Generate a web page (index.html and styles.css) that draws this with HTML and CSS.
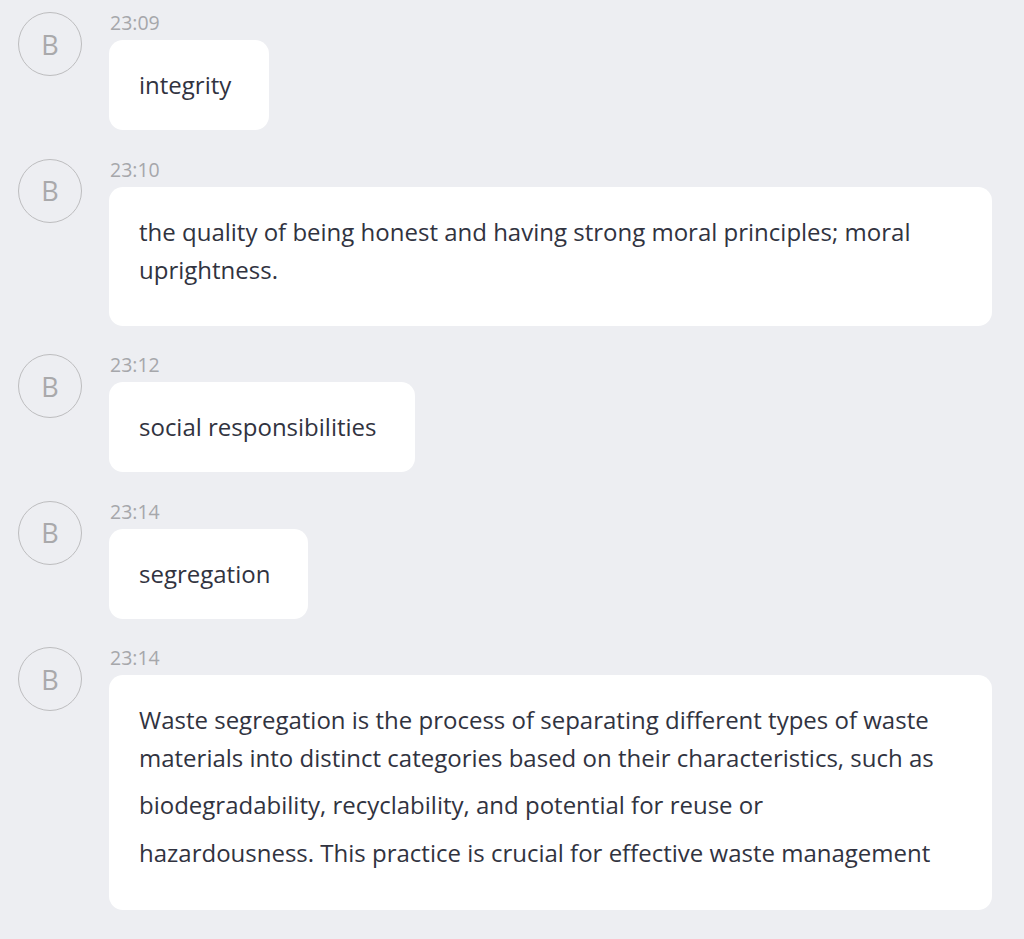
FILE: index.html
```html
<!DOCTYPE html>
<html>
<head>
<meta charset="utf-8">
<link rel="stylesheet" href="styles.css">
</head>
<body>
<div class="chat">
  <div class="row">
    <div class="avatar">B</div>
    <div class="body">
      <div class="time">23:09</div>
      <div class="bubble"><div class="line">integrity</div></div>
    </div>
  </div>
  <div class="row">
    <div class="avatar">B</div>
    <div class="body">
      <div class="time">23:10</div>
      <div class="bubble wide multi"><div class="para">the quality of being honest and having strong moral principles; moral<br>uprightness.</div></div>
    </div>
  </div>
  <div class="row">
    <div class="avatar">B</div>
    <div class="body">
      <div class="time">23:12</div>
      <div class="bubble"><div class="line">social responsibilities</div></div>
    </div>
  </div>
  <div class="row">
    <div class="avatar">B</div>
    <div class="body">
      <div class="time">23:14</div>
      <div class="bubble"><div class="line">segregation</div></div>
    </div>
  </div>
  <div class="row">
    <div class="avatar">B</div>
    <div class="body">
      <div class="time">23:14</div>
      <div class="bubble wide long">
        <div class="para">Waste segregation is the process of separating different types of waste<br>materials into distinct categories based on their characteristics, such as</div>
        <div class="loose">biodegradability, recyclability, and potential for reuse or<br>hazardousness. This practice is crucial for effective waste management</div>
      </div>
    </div>
  </div>
</div>
</body>
</html>
```

FILE: styles.css
```css
html, body {
  margin: 0;
  padding: 0;
  background: #edeef2;
}
body {
  font-family: "Open Sans", "Noto Sans", sans-serif;
  color: #31333f;
}
.chat {
  display: flex;
  flex-direction: column;
  gap: 28.5px;
  padding: 12px 32px 0 18px;
}
.row {
  display: flex;
  align-items: flex-start;
  gap: 27px;
}
.avatar {
  flex: none;
  box-sizing: border-box;
  width: 64px;
  height: 64px;
  border: 1.5px solid #bdbdbf;
  border-radius: 50%;
  display: flex;
  align-items: center;
  justify-content: center;
  color: #a9a9ab;
  font-size: 27px;
  line-height: 1;
}
.body {
  flex: 1;
  min-width: 0;
  display: flex;
  flex-direction: column;
  align-items: flex-start;
}
.time {
  font-size: 19.5px;
  line-height: 22px;
  color: #a6a7ab;
  margin: 0 0 6px 1px;
}
.bubble {
  background: #ffffff;
  border-radius: 14px;
  padding: 26px 38px 26px 30px;
  font-size: 24px;
  line-height: 38px;
  white-space: nowrap;
}
.bubble.wide {
  align-self: stretch;
}
.bubble.multi {
  padding-bottom: 37px;
}
.bubble.long {
  padding-bottom: 33px;
}
.loose {
  margin-top: 4px;
  line-height: 48px;
}
```
